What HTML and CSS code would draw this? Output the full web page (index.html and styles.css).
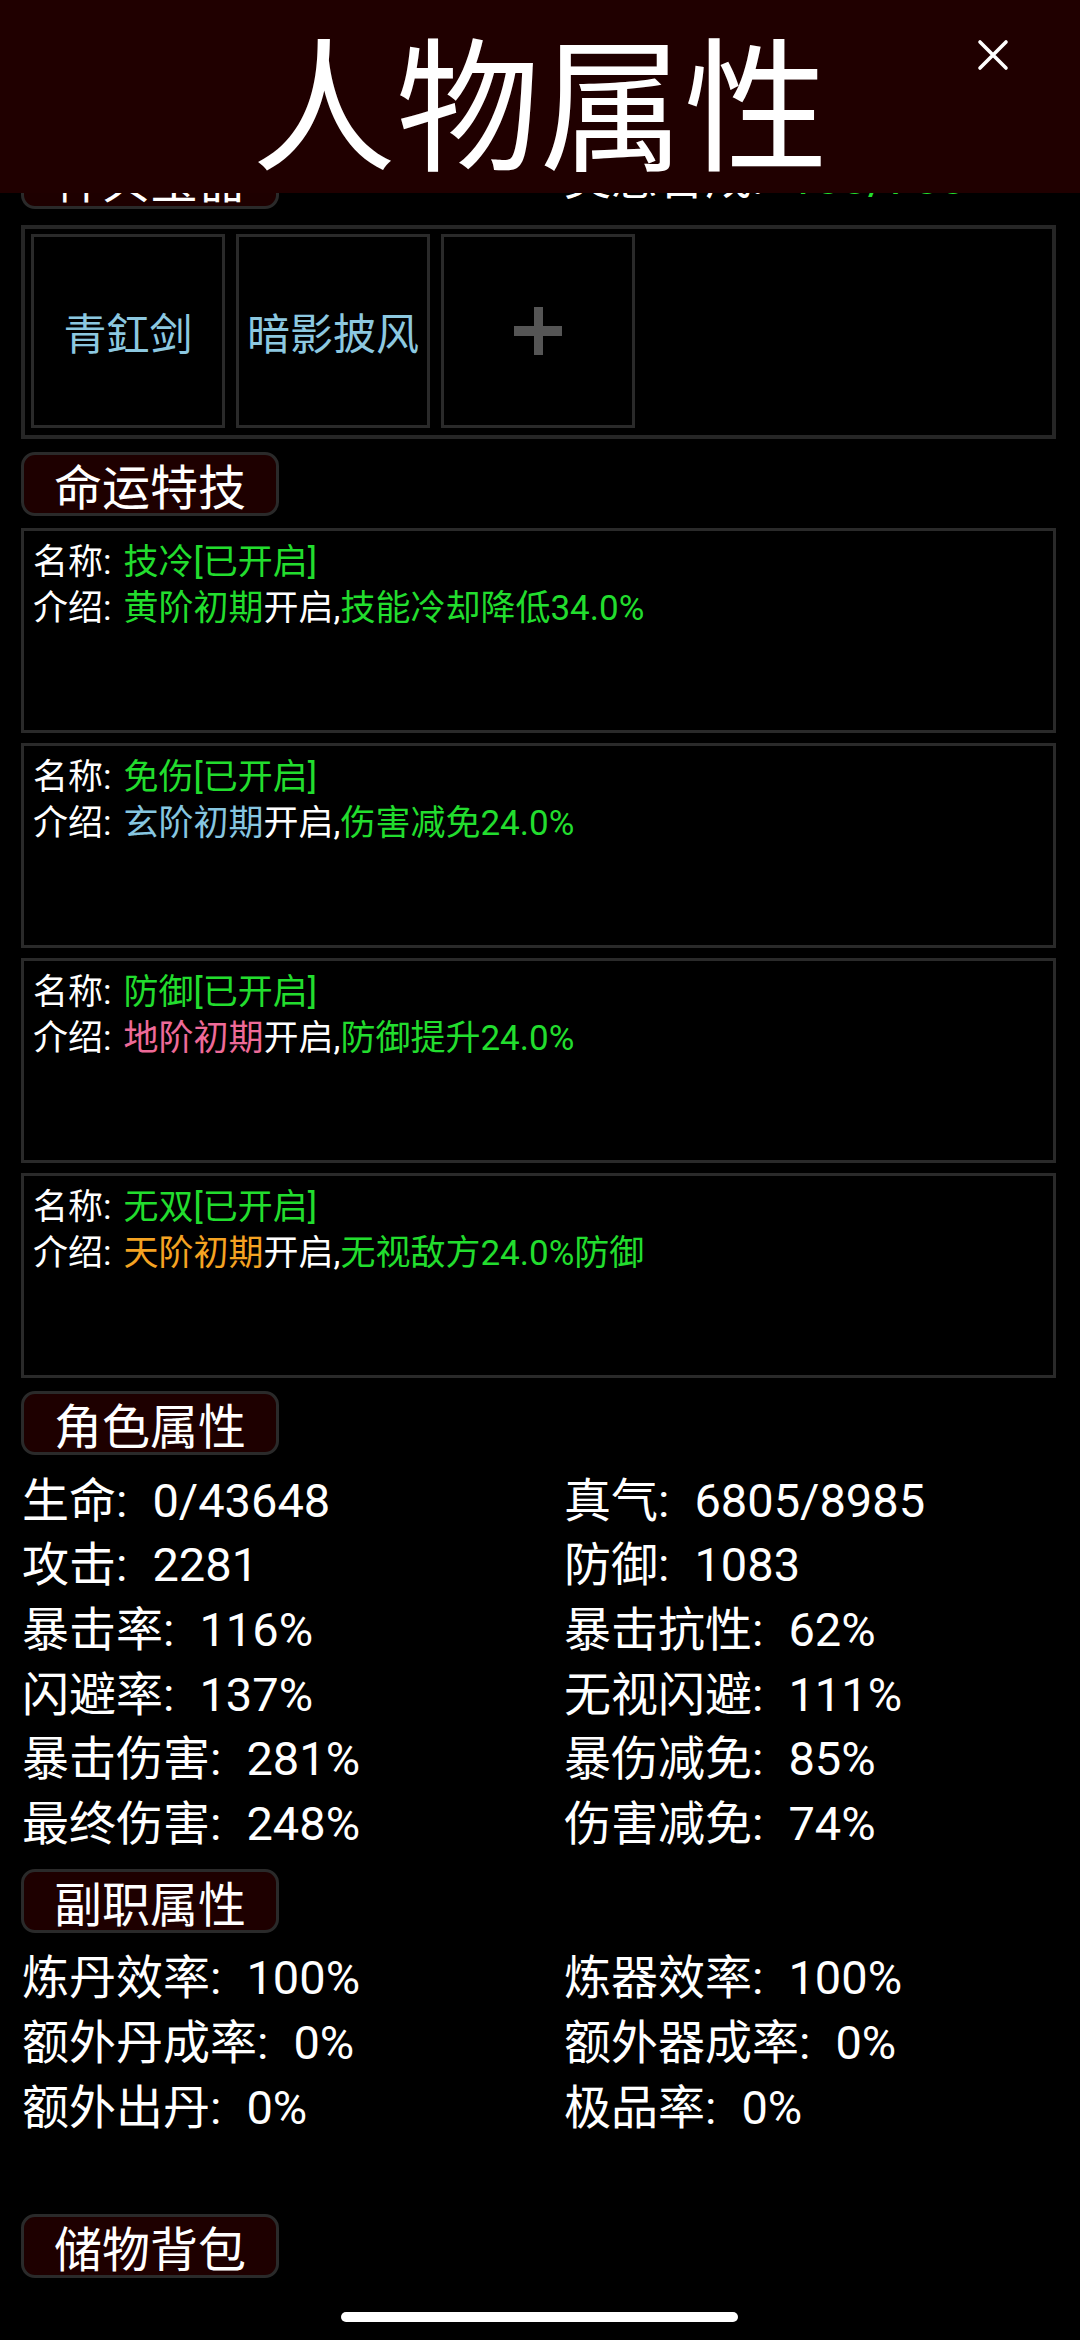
FILE: index.html
```html
<!DOCTYPE html>
<html lang="zh-CN">
<head>
<meta charset="utf-8">
<title>人物属性</title>
<link rel="stylesheet" href="styles.css">
</head>
<body>
<header class="topbar">
  <h1 class="title">人物属性</h1>
  <svg class="close" viewBox="0 0 32 32" width="32" height="32"><path d="M3 3 L29 29 M29 3 L3 29" stroke="#fff" stroke-width="3.6" stroke-linecap="round" fill="none"/></svg>
</header>

<main class="page">
  <div class="head-row">
    <div class="tab">神兵宝器</div>
    <div class="stat"><span class="k">灵感合成:</span><span class="g">100/700</span></div>
  </div>
  <div class="equip">
    <div class="slot">青釭剑</div>
    <div class="slot">暗影披风</div>
    <div class="slot add"><span class="plus"></span></div>
  </div>

  <div class="tab sec">命运特技</div>
  <div class="cards">
    <div class="card">
      <div><span class="k">名称:</span><span class="g">技冷[已开启]</span></div>
      <div><span class="k">介绍:</span><span class="g">黄阶初期</span>开启,<span class="g">技能冷却降低34.0%</span></div>
    </div>
    <div class="card">
      <div><span class="k">名称:</span><span class="g">免伤[已开启]</span></div>
      <div><span class="k">介绍:</span><span class="b">玄阶初期</span>开启,<span class="g">伤害减免24.0%</span></div>
    </div>
    <div class="card">
      <div><span class="k">名称:</span><span class="g">防御[已开启]</span></div>
      <div><span class="k">介绍:</span><span class="p">地阶初期</span>开启,<span class="g">防御提升24.0%</span></div>
    </div>
    <div class="card">
      <div><span class="k">名称:</span><span class="g">无双[已开启]</span></div>
      <div><span class="k">介绍:</span><span class="o">天阶初期</span>开启,<span class="g">无视敌方24.0%防御</span></div>
    </div>
  </div>

  <div class="tab sec">角色属性</div>
  <div class="stats">
    <div><span class="k">生命:</span>0/43648</div><div><span class="k">真气:</span>6805/8985</div>
    <div><span class="k">攻击:</span>2281</div><div><span class="k">防御:</span>1083</div>
    <div><span class="k">暴击率:</span>116%</div><div><span class="k">暴击抗性:</span>62%</div>
    <div><span class="k">闪避率:</span>137%</div><div><span class="k">无视闪避:</span>111%</div>
    <div><span class="k">暴击伤害:</span>281%</div><div><span class="k">暴伤减免:</span>85%</div>
    <div><span class="k">最终伤害:</span>248%</div><div><span class="k">伤害减免:</span>74%</div>
  </div>

  <div class="tab sec">副职属性</div>
  <div class="stats">
    <div><span class="k">炼丹效率:</span>100%</div><div><span class="k">炼器效率:</span>100%</div>
    <div><span class="k">额外丹成率:</span>0%</div><div><span class="k">额外器成率:</span>0%</div>
    <div><span class="k">额外出丹:</span>0%</div><div><span class="k">极品率:</span>0%</div>
  </div>

  <div class="tab bag">储物背包</div>
</main>

<div class="home-bar"></div>
</body>
</html>
```

FILE: styles.css
```css
* { box-sizing: border-box; }
html, body { margin: 0; padding: 0; background: #000; }
body {
  width: 1080px;
  height: 2340px;
  overflow: hidden;
  position: relative;
  color: #fff;
  font-family: Roboto, "Noto Sans CJK SC", sans-serif;
}

.topbar {
  position: absolute;
  top: 0;
  left: 0;
  width: 1080px;
  height: 193px;
  background: #200000;
  z-index: 2;
  display: flex;
  align-items: center;
  justify-content: center;
}
.title {
  margin: 0;
  font-family: "Noto Sans CJK SC", sans-serif;
  font-weight: 400;
  font-size: 144px;
  line-height: 160px;
}
.close {
  position: absolute;
  left: 977px;
  top: 39px;
  width: 32px;
  height: 32px;
}

.page {
  padding: 145px 24px 0 21px;
}

.head-row {
  display: grid;
  grid-template-columns: 543px 1fr;
  align-items: center;
  height: 64px;
}

.tab {
  width: 258px;
  height: 64px;
  border: 3px solid #2a2a2a;
  border-radius: 14px;
  background: #1e0000;
  display: flex;
  align-items: center;
  justify-content: center;
  font-family: "Noto Sans CJK SC", sans-serif;
  font-size: 48px;
  line-height: 1;
}
.sec { margin-top: 13px; }
.bag { margin-top: 75px; }

.stat { font-size: 47px; line-height: 1; }

.k { margin-right: 25px; }

.g { color: #22dd2e; }
.b { color: #86c6e0; }
.p { color: #ee6a98; }
.o { color: #f5a322; }

.equip {
  margin-top: 16px;
  height: 214px;
  border: 4px solid #262626;
  padding: 5px 6px;
  display: flex;
  gap: 11px;
}
.slot {
  width: 194px;
  height: 194px;
  border: 3px solid #2a2a2a;
  display: flex;
  align-items: center;
  justify-content: center;
  font-family: "Noto Sans CJK SC", sans-serif;
  font-size: 43px;
  color: #8cc8e0;
}
.plus {
  position: relative;
  width: 48px;
  height: 48px;
}
.plus::before, .plus::after {
  content: "";
  position: absolute;
  background: #555;
}
.plus::before { left: 0; right: 0; top: 19px; height: 10px; }
.plus::after { top: 0; bottom: 0; left: 20px; width: 9px; }

.cards {
  margin-top: 12px;
  display: flex;
  flex-direction: column;
  gap: 10px;
}
.card {
  height: 205px;
  border: 3px solid #2a2a2a;
  padding: 9px 9px;
  font-size: 35px;
  line-height: 46px;
}
.card .k { margin-right: 12px; }

.stats {
  margin-top: 13px;
  padding-left: 1px;
  display: grid;
  grid-template-columns: 542px 1fr;
  grid-auto-rows: 64.6px;
  align-items: center;
  font-size: 47px;
  line-height: 1;
}

.home-bar {
  position: absolute;
  left: 341px;
  top: 2312px;
  width: 397px;
  height: 10px;
  border-radius: 5px;
  background: #fff;
}
```
